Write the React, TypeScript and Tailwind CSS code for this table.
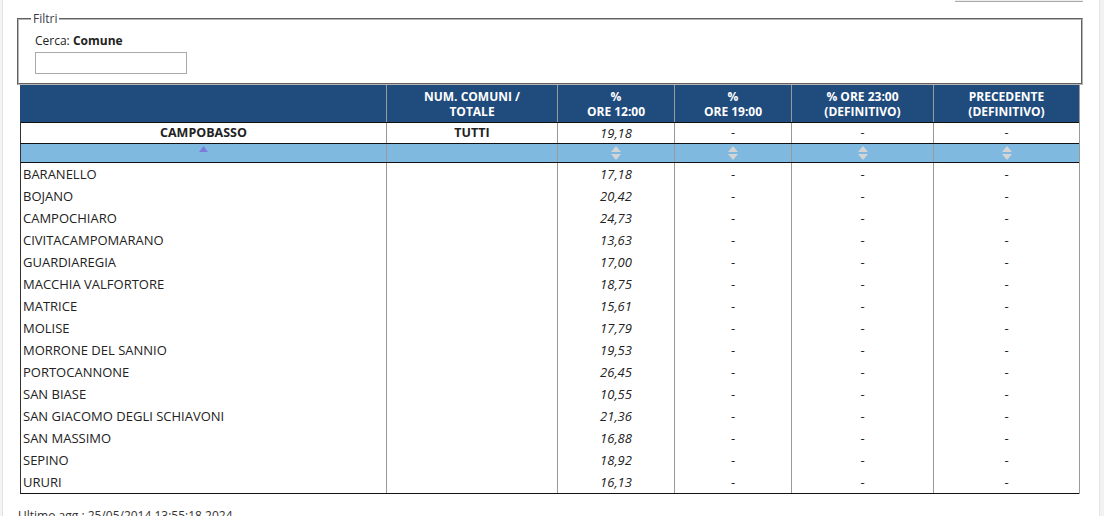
import React from 'react';

interface Row {
  comune: string;
  ore12: string;
}

const rows: Row[] = [
  { comune: 'BARANELLO', ore12: '17,18' },
  { comune: 'BOJANO', ore12: '20,42' },
  { comune: 'CAMPOCHIARO', ore12: '24,73' },
  { comune: 'CIVITACAMPOMARANO', ore12: '13,63' },
  { comune: 'GUARDIAREGIA', ore12: '17,00' },
  { comune: 'MACCHIA VALFORTORE', ore12: '18,75' },
  { comune: 'MATRICE', ore12: '15,61' },
  { comune: 'MOLISE', ore12: '17,79' },
  { comune: 'MORRONE DEL SANNIO', ore12: '19,53' },
  { comune: 'PORTOCANNONE', ore12: '26,45' },
  { comune: 'SAN BIASE', ore12: '10,55' },
  { comune: 'SAN GIACOMO DEGLI SCHIAVONI', ore12: '21,36' },
  { comune: 'SAN MASSIMO', ore12: '16,88' },
  { comune: 'SEPINO', ore12: '18,92' },
  { comune: 'URURI', ore12: '16,13' },
];

const grid = 'grid grid-cols-[365px_171px_117px_117px_142px_146px]';

const SortBoth: React.FC = () => (
  <svg width="10" height="14" viewBox="0 0 10 14">
    <polygon points="5,0 10,6 0,6" fill="#d4d4d4" />
    <polygon points="0,8 10,8 5,14" fill="#d4d4d4" />
  </svg>
);

const App: React.FC = () => {
  return (
    <div
      className="flex h-[516px] w-[1104px] overflow-hidden bg-white text-[12px] text-[#222]"
      style={{ fontFamily: '"Open Sans", "Noto Sans", sans-serif' }}
    >
      <div className="w-[3px] shrink-0 border-r border-[#e2e2e2] bg-[#f4f4f4]" />

      <div className="flex w-[1096px] flex-col pl-[14px]">
        <div className="flex w-[1066px] justify-end">
          <div className="h-[2px] w-[128px] border-b border-[#aaa] bg-[#eee]" />
        </div>

        {/* Filtri */}
        <fieldset className="mt-[9px] w-[1066px] border-2 border-[#b5b5b5] px-[16px] pb-[9px] [border-style:groove]">
          <legend className="ml-[-4px] px-[2px] leading-[16px] text-[#3a3a4a]">Filtri</legend>
          <div className="mt-[6px] leading-[16px]">
            Cerca: <span className="font-bold">Comune</span>
          </div>
          <input type="text" className="mt-[3px] block h-[22px] w-[152px] border border-[#a9a9a9] bg-white outline-none" />
        </fieldset>

        {/* Tabella */}
        <div className="ml-[3px] w-[1060px] border-r border-[#999]">
          <div className={`${grid} h-[38px] border-b border-[#111] border-l border-l-[#1f4b7d] bg-[#1f4b7d] font-bold leading-[15px] text-white`}>
            <div />
            <div className="flex flex-col items-center justify-center border-l border-[#999]">
              <span>NUM. COMUNI /</span>
              <span>TOTALE</span>
            </div>
            <div className="flex flex-col items-center justify-center border-l border-[#999]">
              <span>%</span>
              <span>ORE 12:00</span>
            </div>
            <div className="flex flex-col items-center justify-center border-l border-[#999]">
              <span>%</span>
              <span>ORE 19:00</span>
            </div>
            <div className="flex flex-col items-center justify-center border-l border-[#999]">
              <span>% ORE 23:00</span>
              <span>(DEFINITIVO)</span>
            </div>
            <div className="flex flex-col items-center justify-center border-l border-[#999]">
              <span>PRECEDENTE</span>
              <span>(DEFINITIVO)</span>
            </div>
          </div>

          <div className={`${grid} h-[21px] border-b border-[#111] border-l border-l-[#333] text-[12.5px] leading-[20px]`}>
            <div className="text-center font-bold">CAMPOBASSO</div>
            <div className="border-l border-[#999] text-center font-bold">TUTTI</div>
            <div className="border-l border-[#999] text-center text-[13px] italic">19,18</div>
            <div className="border-l border-[#999] text-center">-</div>
            <div className="border-l border-[#999] text-center">-</div>
            <div className="border-l border-[#999] text-center">-</div>
          </div>

          <div className={`${grid} h-[19px] border-b border-[#111] border-l border-l-[#333] bg-[#7fb9df]`}>
            <div className="flex justify-center pt-[2px]">
              <svg width="9" height="6" viewBox="0 0 9 6">
                <polygon points="4.5,0 9,6 0,6" fill="#7b7bdc" />
              </svg>
            </div>
            <div className="border-l border-[#999]" />
            <div className="flex items-center justify-center border-l border-[#999]"><SortBoth /></div>
            <div className="flex items-center justify-center border-l border-[#999]"><SortBoth /></div>
            <div className="flex items-center justify-center border-l border-[#999]"><SortBoth /></div>
            <div className="flex items-center justify-center border-l border-[#999]"><SortBoth /></div>
          </div>

          <div className="border-b border-[#111] border-l border-l-[#333] text-[13px]">
            {rows.map((r) => (
              <div key={r.comune} className={`${grid} h-[22px] leading-[22px]`}>
                <div className="pl-[2px]">{r.comune}</div>
                <div className="border-l border-[#999]" />
                <div className="border-l border-[#999] text-center italic">{r.ore12}</div>
                <div className="border-l border-[#999] text-center">-</div>
                <div className="border-l border-[#999] text-center">-</div>
                <div className="border-l border-[#999] text-center">-</div>
              </div>
            ))}
          </div>
        </div>

        <div className="mt-[14px] pl-[1px] leading-[16px] text-[#333]">Ultimo agg.: 25/05/2014 13:55:18 2024</div>
      </div>

      <div className="ml-auto w-[5px] shrink-0 border-l border-[#e4e4e4] bg-[#f2f2f2]" />
    </div>
  );
};

export default App;
